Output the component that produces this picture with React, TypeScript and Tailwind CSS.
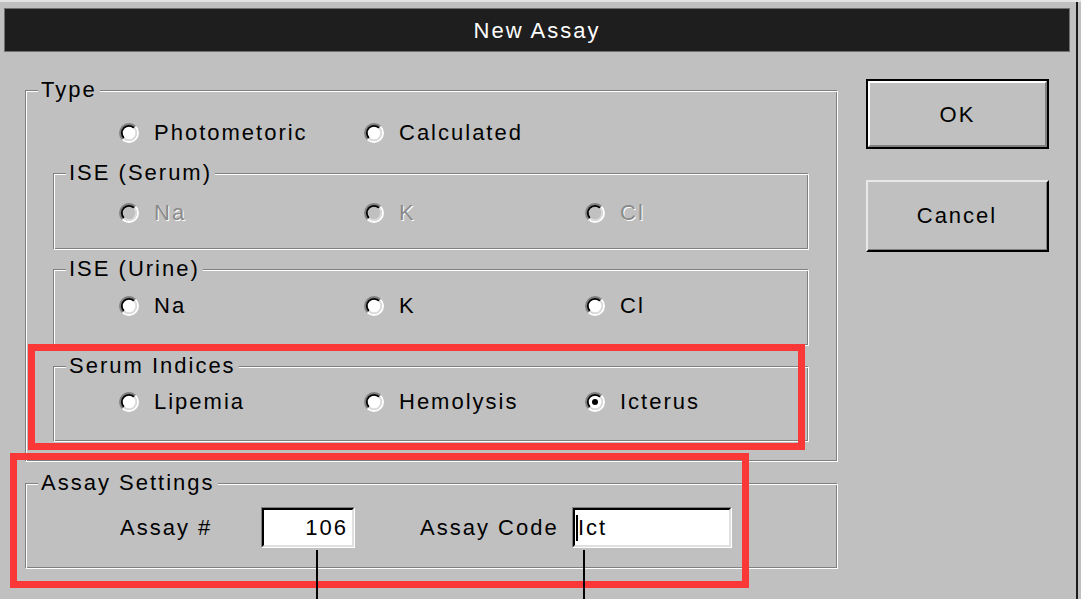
import React from "react";

const FONT = { fontFamily: '"Liberation Sans", Arial, sans-serif' };

function Radio({ checked = false, disabled = false }: { checked?: boolean; disabled?: boolean }) {
  const c = 10;
  const arc = (r: number, first: boolean) => {
    const d = r * 0.7071;
    const bl = `${c - d} ${c + d}`;
    const tr = `${c + d} ${c - d}`;
    return first ? `M ${bl} A ${r} ${r} 0 0 1 ${tr}` : `M ${tr} A ${r} ${r} 0 0 1 ${bl}`;
  };
  return (
    <svg width="20" height="20" viewBox="0 0 20 20" className="shrink-0">
      <circle cx={c} cy={c} r="7" fill={disabled ? "#c0c0c0" : "#ffffff"} />
      <path d={arc(9, true)} stroke="#808080" strokeWidth="2" fill="none" />
      <path d={arc(9, false)} stroke="#ffffff" strokeWidth="2" fill="none" />
      <path d={arc(7.2, true)} stroke="#000000" strokeWidth="1.8" fill="none" />
      <path d={arc(7.2, false)} stroke="#dcdcdc" strokeWidth="1.8" fill="none" />
      {checked && <circle cx={c} cy={c} r="3" fill="#000000" />}
    </svg>
  );
}

function Option({ label, checked, disabled }: { label: string; checked?: boolean; disabled?: boolean }) {
  return (
    <div className="flex items-center h-[24px] -ml-[1px]">
      <Radio checked={checked} disabled={disabled} />
      <span
        className={
          "ml-[15px] leading-[24px] " +
          (disabled ? "text-[#8a8a8a] [text-shadow:1px_1px_0_#ffffff]" : "text-black")
        }
      >
        {label}
      </span>
    </div>
  );
}

function Group({
  label,
  className,
  children,
}: {
  label: string;
  className: string;
  children: React.ReactNode;
}) {
  return (
    <fieldset
      className={
        "m-0 p-0 border border-t-[#808080] border-l-[#808080] border-b-white border-r-white shadow-[inset_1px_1px_0_#ffffff,inset_-1px_-1px_0_#808080] " +
        className
      }
    >
      <legend className="ml-[12px] px-[3px] leading-[24px] bg-[#c0c0c0] text-black">{label}</legend>
      {children}
    </fieldset>
  );
}

function ThreeCols({ children }: { children: React.ReactNode }) {
  return <div className="grid grid-cols-[245px_221px_200px] ml-[66px]">{children}</div>;
}

export default function App() {
  return (
    <div
      className="relative w-[1081px] h-[599px] overflow-hidden bg-[#c0c0c0] border-t-2 border-t-[#e4e4e4] pr-[3px] text-[22px] tracking-[2px]"
      style={FONT}
    >
      <div className="h-full border-r-2 border-r-[#1a1a1a] flex flex-col">
        <div className="mt-[6px] ml-[4px] mr-[6px] h-[44px] shrink-0 bg-[#1e1e1e] border border-[#707070] flex items-center justify-center text-white">
          New Assay
        </div>

        <div className="flex pl-[25px] pt-[26px]">
          <div className="w-[813px] flex flex-col">
            <Group label="Type" className="h-[384px]">
              <div className="mt-[19px] ml-[94px] flex">
                <div className="w-[245px]">
                  <Option label="Photometoric" />
                </div>
                <Option label="Calculated" />
              </div>

              <div className="ml-[27px] mt-[16px] flex flex-col gap-[7px] w-[756px]">
                <Group label="ISE (Serum)" className="h-[89px]">
                  <div className="pt-[16px]">
                    <ThreeCols>
                      <Option label="Na" disabled />
                      <Option label="K" disabled />
                      <Option label="Cl" disabled />
                    </ThreeCols>
                  </div>
                </Group>
                <Group label="ISE (Urine)" className="h-[89px]">
                  <div className="pt-[13px]">
                    <ThreeCols>
                      <Option label="Na" />
                      <Option label="K" />
                      <Option label="Cl" />
                    </ThreeCols>
                  </div>
                </Group>
                <Group label="Serum Indices" className="h-[88px] mt-[1px]">
                  <div className="pt-[12px]">
                    <ThreeCols>
                      <Option label="Lipemia" />
                      <Option label="Hemolysis" />
                      <Option label="Icterus" checked />
                    </ThreeCols>
                  </div>
                </Group>
              </div>
            </Group>

            <Group label="Assay Settings" className="h-[98px] mt-[9px]">
              <div className="pt-[12px] flex items-center">
                <div className="ml-[94px] w-[141px] leading-[24px]">Assay #</div>
                <div className="w-[94px] h-[41px] border border-t-[#808080] border-l-[#808080] border-b-white border-r-white">
                  <div className="h-full border-2 border-t-black border-l-black border-b-[#e0e0e0] border-r-[#e0e0e0] bg-white flex items-center justify-end pr-[4px] leading-[24px]">
                    106
                  </div>
                </div>
                <div className="ml-[65px] w-[152px] leading-[24px]">Assay Code</div>
                <div className="w-[160px] h-[41px] border border-t-[#808080] border-l-[#808080] border-b-white border-r-white">
                  <div className="h-full border-2 border-t-black border-l-black border-b-[#e0e0e0] border-r-[#e0e0e0] bg-white flex items-center pl-[1px] leading-[24px]">
                    <span className="w-[2px] h-[26px] bg-black" />
                    <span>Ict</span>
                  </div>
                </div>
              </div>
            </Group>
          </div>

          <div className="ml-[28px] pt-[1px] flex flex-col gap-[31px]">
            <div className="w-[183px] h-[70px] border-2 border-black">
              <div className="h-full border-2 border-t-white border-l-white border-b-[#808080] border-r-[#808080] flex items-center justify-center text-black">
                OK
              </div>
            </div>
            <div className="w-[183px] h-[72px] border-2 border-t-[#e8e8e8] border-l-[#e8e8e8] border-b-black border-r-black">
              <div className="h-full border-b border-r border-b-[#808080] border-r-[#808080] flex items-center justify-center text-black">
                Cancel
              </div>
            </div>
          </div>
        </div>
      </div>

      {/* annotation overlays */}
      <div className="absolute left-[28px] top-[342px] w-[777px] h-[106px] border-[7px] border-[#fa3838]" />
      <div className="absolute left-[10px] top-[451px] w-[739px] h-[135px] border-[7px] border-[#fa3838]" />
      <div className="absolute left-[316px] top-[548px] w-[2px] h-[51px] bg-black" />
      <div className="absolute left-[583px] top-[548px] w-[2px] h-[51px] bg-black" />
    </div>
  );
}
